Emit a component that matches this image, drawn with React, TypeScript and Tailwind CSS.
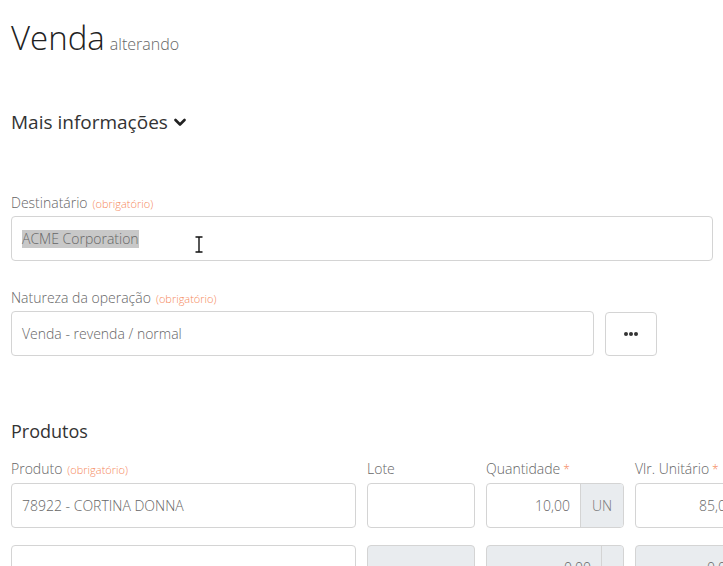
import React from "react";

function Req() {
  return <span className="ml-[5px] text-[11px] text-[#f5875a]">(obrigatório)</span>;
}

function Star() {
  return <span className="ml-[3px] text-[12px] text-[#f5875a]">*</span>;
}

export default function App() {
  return (
    <div className="w-[723px] h-[566px] overflow-hidden bg-white font-['Open_Sans',sans-serif] text-[#555] px-[11px]">
      <h1 className="mt-[18px] h-[40px] flex items-baseline leading-[40px]">
        <span className="text-[33px] font-light text-[#222]">Venda</span>
        <span className="ml-[5px] text-[16px] font-light text-[#666]">alterando</span>
      </h1>

      <div className="mt-[52px] h-[24px] flex items-center text-[19px] leading-[24px] text-[#333]">
        <span>Mais informações</span>
        <svg className="ml-[6px] mt-[1px]" width="12" height="9" viewBox="0 0 12 9">
          <path d="M1.5 2 L6 6.5 L10.5 2" fill="none" stroke="#222" strokeWidth="2.6" strokeLinecap="round" strokeLinejoin="round" />
        </svg>
      </div>

      <div className="mt-[59px]">
        <div className="h-[20px] leading-[20px] text-[14px] font-light text-[#666]">
          Destinatário<Req />
        </div>
        <div className="mt-[3px] h-[45px] w-[702px] border border-[#d4d4d4] rounded-[4px] flex items-center px-[10px] relative">
          <span className="text-[14px] font-light text-[#666] bg-[#c8c8c8] leading-[18px]">ACME Corporation</span>
          <svg className="absolute left-[183px] top-[19px]" width="8" height="17" viewBox="0 0 8 17">
            <path d="M0.5 1 H7.5 M4 1 V16 M0.5 16 H7.5" fill="none" stroke="#111" strokeWidth="1.4" />
          </svg>
        </div>
      </div>

      <div className="mt-[27px]">
        <div className="h-[20px] leading-[20px] text-[14px] font-light text-[#666]">
          Natureza da operação<Req />
        </div>
        <div className="mt-[3px] flex gap-[11px]">
          <div className="h-[45px] w-[583px] border border-[#d4d4d4] rounded-[4px] flex items-center px-[10px]">
            <span className="text-[14px] font-light text-[#666]">Venda - revenda / normal</span>
          </div>
          <div className="mt-[1px] h-[44px] w-[52px] border border-[#d4d4d4] rounded-[4px] flex items-center justify-center gap-[1px]">
            <span className="w-[4px] h-[4px] rounded-full bg-[#333]" />
            <span className="w-[4px] h-[4px] rounded-full bg-[#333]" />
            <span className="w-[4px] h-[4px] rounded-full bg-[#333]" />
          </div>
        </div>
      </div>

      <div className="mt-[63px] h-[24px] leading-[24px] text-[18px] text-[#333]">Produtos</div>

      <div className="mt-[16px] flex gap-[11px] w-[760px]">
        <div className="w-[345px] shrink-0">
          <div className="h-[20px] leading-[20px] text-[14px] font-light text-[#666]">
            Produto<Req />
          </div>
          <div className="mt-[4px] h-[45px] border border-[#d4d4d4] rounded-[4px] flex items-center px-[10px]">
            <span className="text-[14px] font-light text-[#666]">78922 - CORTINA DONNA</span>
          </div>
          <div className="mt-[17px] h-[45px] border border-[#d4d4d4] rounded-[4px] bg-white" />
        </div>

        <div className="w-[108px] shrink-0">
          <div className="h-[20px] leading-[20px] text-[14px] font-light text-[#666]">Lote</div>
          <div className="mt-[4px] h-[45px] border border-[#d4d4d4] rounded-[4px] bg-white" />
          <div className="mt-[17px] h-[45px] border border-[#d4d4d4] rounded-[4px] bg-[#e9ecef]" />
        </div>

        <div className="w-[138px] shrink-0">
          <div className="h-[20px] leading-[20px] text-[14px] font-light text-[#666]">
            Quantidade<Star />
          </div>
          <div className="mt-[4px] h-[45px] border border-[#d4d4d4] rounded-[4px] flex overflow-hidden">
            <div className="flex-1 flex items-center justify-end px-[10px] text-[14px] font-light text-[#666]">10,00</div>
            <div className="w-[43px] border-l border-[#d4d4d4] bg-[#e9ecef] flex items-center justify-center text-[14px] font-light text-[#777]">UN</div>
          </div>
          <div className="mt-[17px] h-[45px] border border-[#d4d4d4] rounded-[4px] flex overflow-hidden bg-[#e9ecef]">
            <div className="flex-1 flex items-center justify-end px-[10px] text-[14px] font-light text-[#666]">0,00</div>
            <div className="w-[22px] border-l border-[#d4d4d4] bg-[#e9ecef]" />
          </div>
        </div>

        <div className="w-[112px] shrink-0">
          <div className="h-[20px] leading-[20px] text-[14px] font-light text-[#666] whitespace-nowrap">
            Vlr. Unitário<Star />
          </div>
          <div className="mt-[4px] h-[45px] border border-[#d4d4d4] rounded-[4px] flex items-center justify-end px-[12px] text-[14px] font-light text-[#666]">85,00</div>
          <div className="mt-[17px] h-[45px] border border-[#d4d4d4] rounded-[4px] bg-[#e9ecef] flex items-center justify-end px-[12px] text-[14px] font-light text-[#666]">0,00</div>
        </div>
      </div>
    </div>
  );
}
